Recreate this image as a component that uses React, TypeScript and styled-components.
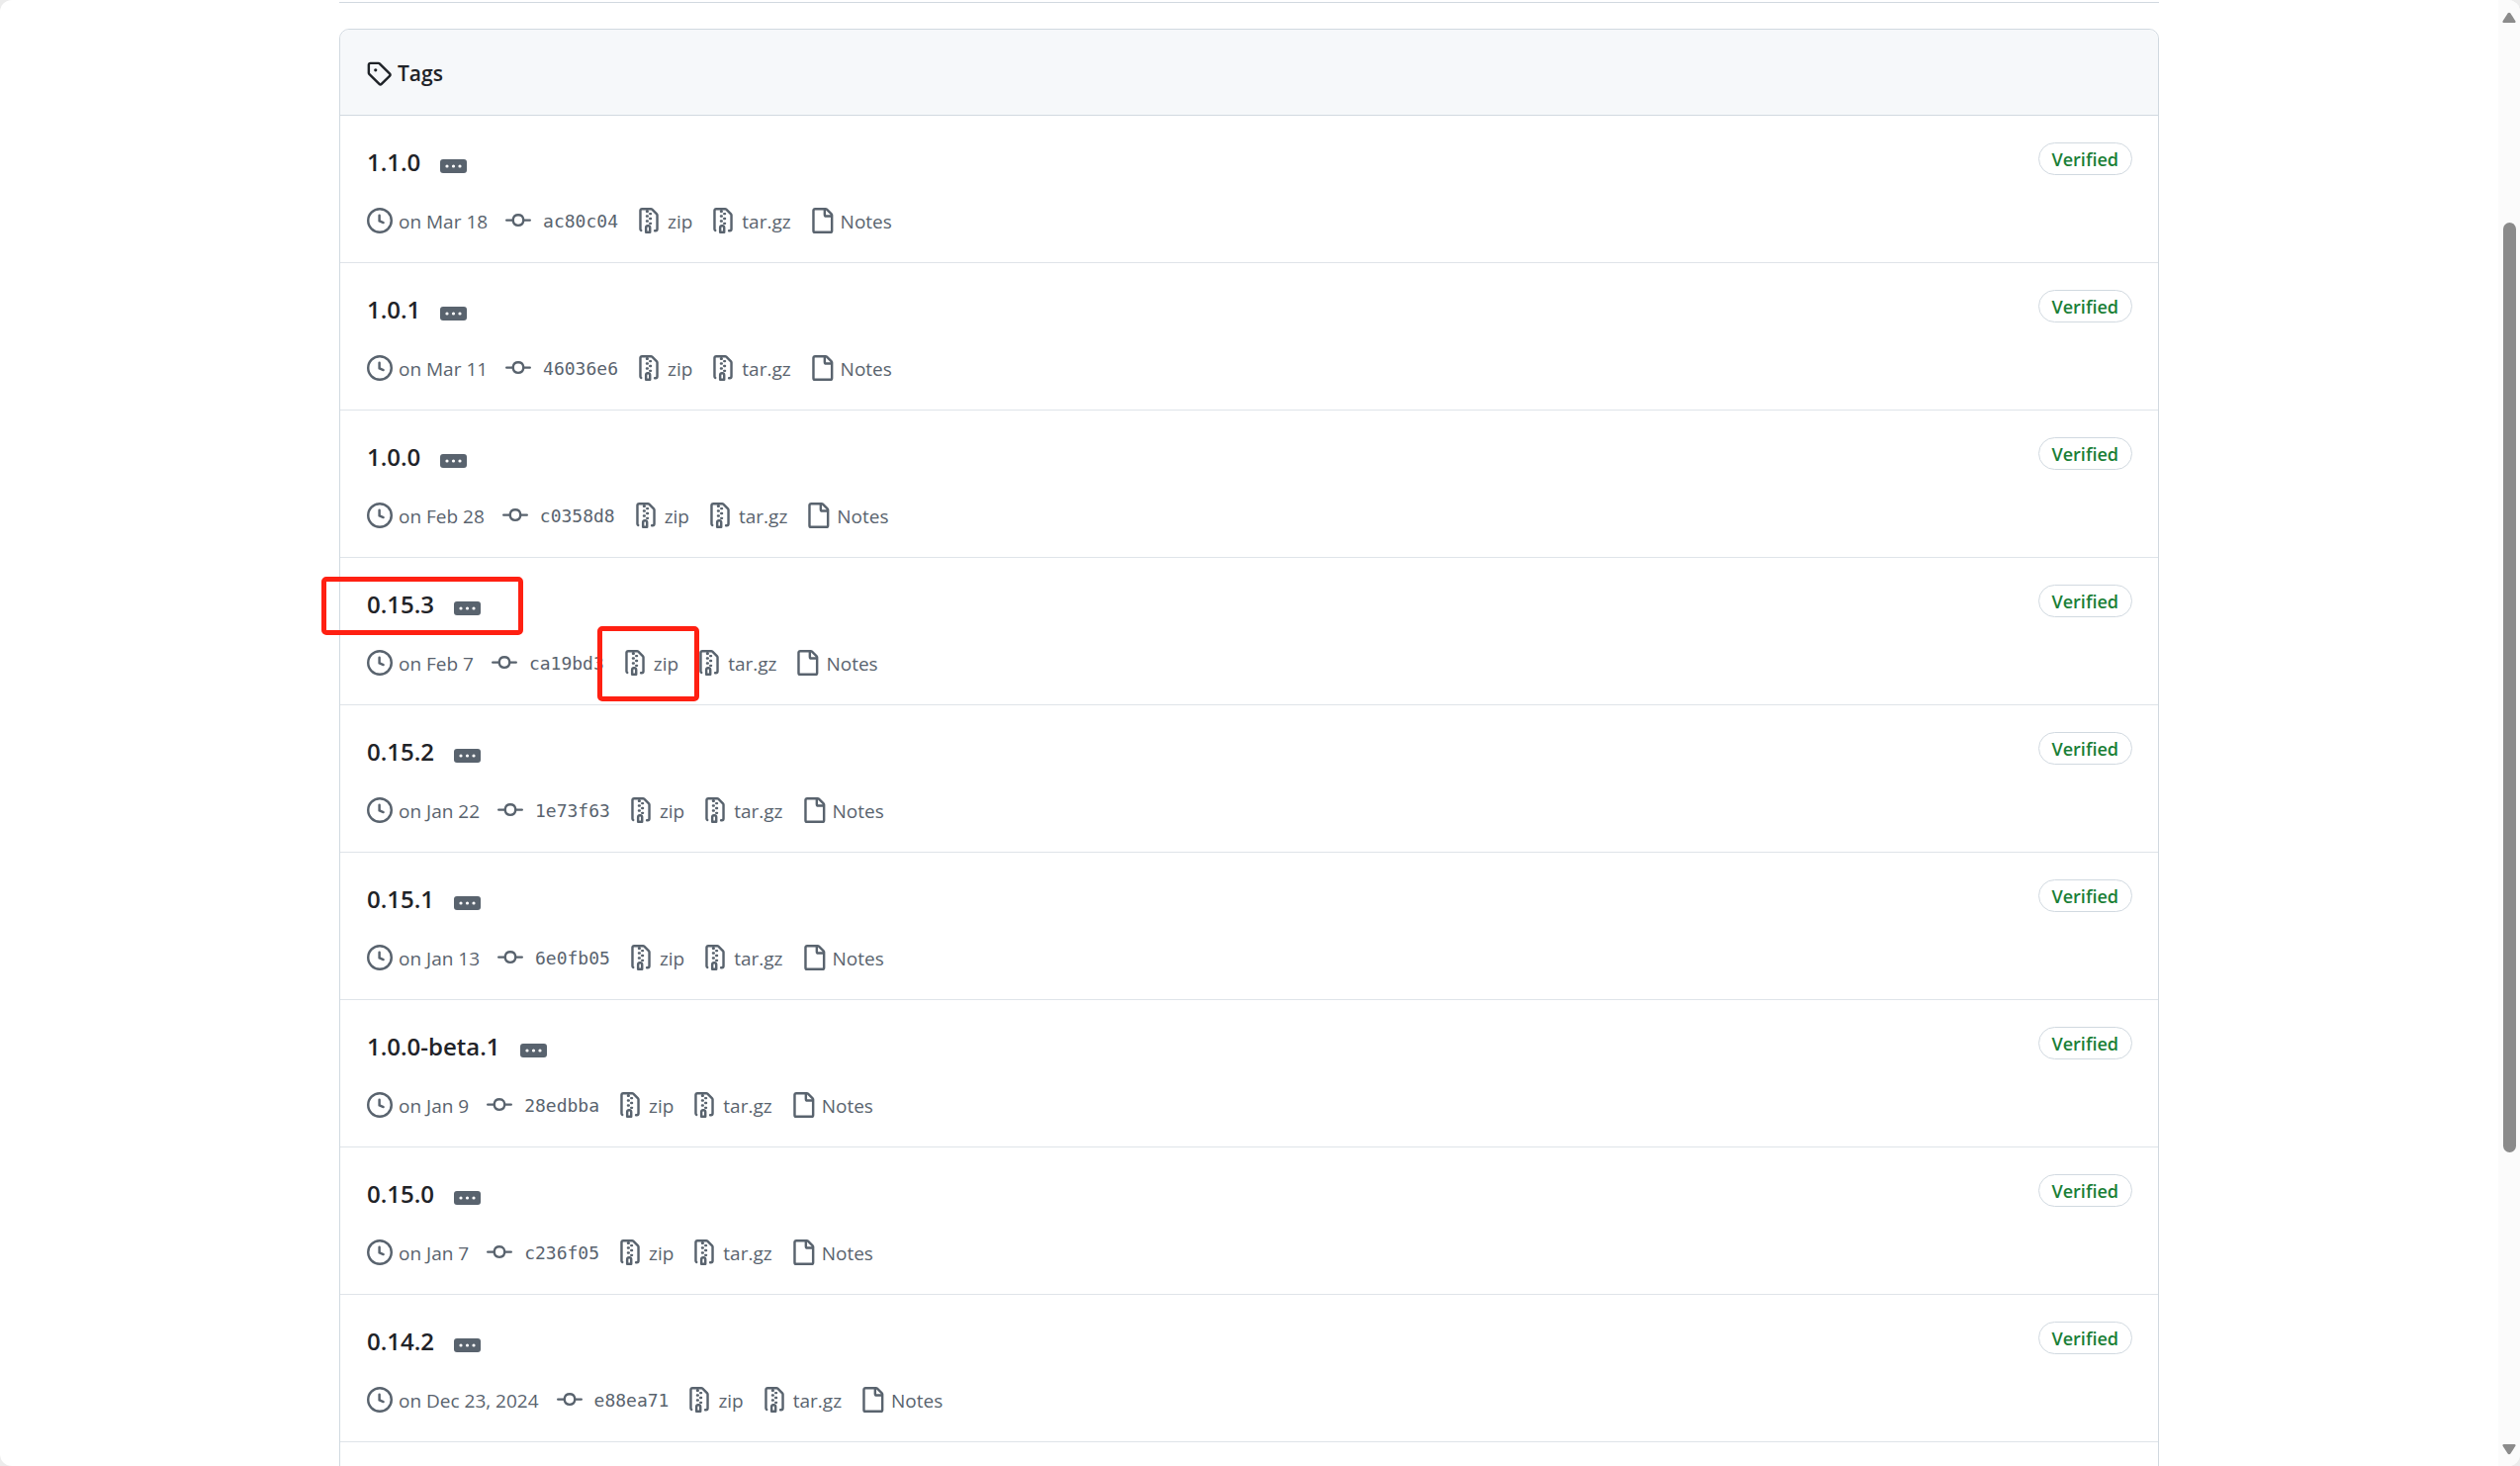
import React from 'react';
import styled, { createGlobalStyle } from 'styled-components';

const GlobalStyle = createGlobalStyle`
  * { box-sizing: border-box; }
  body {
    margin: 0;
    background: #ececec;
    color: #1f2328;
    font-family: "Open Sans", "Noto Sans", sans-serif;
  }
`;

const Window = styled.div`
  display: flex;
  height: 100vh;
  overflow: hidden;
  background: #ffffff;
  border-radius: 12px;
`;

const Content = styled.main`
  flex: 1;
  min-width: 0;
  height: 100%;
  overflow: hidden;
  padding: 2px 24px 0;
`;

const Container = styled.div`
  max-width: 1840px;
  margin: 0 auto;
`;

const TopRule = styled.hr`
  height: 1px;
  margin: 0 0 26px;
  border: 0;
  background: #d1d9e0;
`;

const Box = styled.section`
  border: 1px solid #d1d9e0;
  border-radius: 10px;
`;

const BoxHeader = styled.header`
  display: flex;
  align-items: center;
  gap: 6px;
  height: 87px;
  padding: 2px 26px 0;
  border-bottom: 1px solid #d1d9e0;
  border-radius: 10px 10px 0 0;
  background: #f6f8fa;
`;

const Heading = styled.h2`
  margin: 0;
  font-size: 21px;
  line-height: 30px;
  font-weight: 600;
`;

const TagList = styled.ul`
  margin: 0;
  padding: 0;
  list-style: none;
`;

const Row = styled.li`
  position: relative;
  display: flex;
  justify-content: space-between;
  align-items: flex-start;
  height: 149px;
  padding: 27px 26px 0 27px;
  border-bottom: 1px solid #dfe4e9;
`;

const TitleLine = styled.div`
  display: flex;
  align-items: center;
  gap: 20px;
  height: 40px;
`;

const TagName = styled.h3`
  margin: 0;
  font-size: 24px;
  line-height: 32px;
  font-weight: 600;
`;

const Link = styled.a`
  color: inherit;
  text-decoration: none;
`;

const Expander = styled.button`
  display: flex;
  align-items: center;
  justify-content: center;
  width: 27px;
  height: 14px;
  margin-top: 8px;
  padding: 0;
  border: 0;
  border-radius: 3px;
  background: #59636e;
  cursor: pointer;
`;

const MetaLine = styled.ul`
  display: flex;
  align-items: center;
  gap: 18px;
  height: 30px;
  margin: 24px 0 0;
  padding: 0;
  list-style: none;
  color: #59636e;
  font-size: 19px;
  line-height: 26px;
`;

const MetaItem = styled.li`
  display: flex;
`;

const MetaLink = styled(Link)`
  display: flex;
  align-items: center;
  gap: 6px;
`;

const MetaDate = styled.span`
  display: flex;
  align-items: center;
  gap: 6px;
`;

const HashLink = styled(MetaLink)`
  gap: 12px;
`;

const MetaText = styled.span`
  padding-top: 2px;
`;

const Hash = styled.code`
  padding-top: 2px;
  font-family: "DejaVu Sans Mono", "Liberation Mono", monospace;
  font-size: 18px;
`;

const Icon = styled.svg`
  flex: none;
  width: 26px;
  height: 26px;
  fill: currentColor;
`;

const Verified = styled.button`
  height: 33px;
  padding: 0 13px;
  border: 1px solid #d1d9e0;
  border-radius: 17px;
  background: transparent;
  color: #1a7f37;
  font-family: inherit;
  font-size: 18px;
  line-height: 30px;
  font-weight: 600;
  cursor: pointer;
`;

const Marker = styled.span`
  position: absolute;
  border: 5px solid #ff2012;
  border-radius: 5px;
  pointer-events: none;
`;

const NameMarker = styled(Marker)`
  top: 19px;
  left: -19px;
  width: 204px;
  height: 59px;
`;

const ZipMarker = styled(Marker)`
  top: 69px;
  left: 260px;
  width: 103px;
  height: 76px;
`;

const Scrollbar = styled.div`
  display: flex;
  flex-direction: column;
  align-items: center;
  width: 22px;
  padding: 12px 0 11px;
  background: #fbfbfb;
`;

const Arrow = styled.svg`
  flex: none;
  width: 14px;
  height: 12px;
  fill: #8b8b8b;
`;

const Track = styled.div`
  display: grid;
  flex: 1;
  grid-template-rows: 201fr 940fr 294fr;
`;

const Thumb = styled.div`
  grid-row: 2;
  width: 13px;
  border-radius: 7px;
  background: #8b8b8b;
`;

const paths = {
  tag: 'M1 7.775V2.75C1 1.784 1.784 1 2.75 1h5.025c.464 0 .91.184 1.238.513l6.25 6.25a1.75 1.75 0 0 1 0 2.474l-5.026 5.026a1.75 1.75 0 0 1-2.474 0l-6.25-6.25A1.752 1.752 0 0 1 1 7.775Zm1.5 0c0 .066.026.13.073.177l6.25 6.25a.25.25 0 0 0 .354 0l5.025-5.025a.25.25 0 0 0 0-.354l-6.25-6.25a.25.25 0 0 0-.177-.073H2.75a.25.25 0 0 0-.25.25ZM6 5a1 1 0 1 1 0 2 1 1 0 0 1 0-2Z',
  clock: 'M8 0a8 8 0 1 1 0 16A8 8 0 0 1 8 0ZM1.5 8a6.5 6.5 0 1 0 13 0 6.5 6.5 0 0 0-13 0Zm7-3.25v2.992l2.028.812a.75.75 0 0 1-.557 1.392l-2.5-1A.751.751 0 0 1 7 8.25v-3.5a.75.75 0 0 1 1.5 0Z',
  commit: 'M11.93 8.5a4.002 4.002 0 0 1-7.86 0H.75a.75.75 0 0 1 0-1.5h3.32a4.002 4.002 0 0 1 7.86 0h3.32a.75.75 0 0 1 0 1.5Zm-1.43-.75a2.5 2.5 0 1 0-5 0 2.5 2.5 0 0 0 5 0Z',
  zip: 'M3.5 1.75v11.5c0 .09.048.173.126.217a.75.75 0 0 1-.752 1.298A1.748 1.748 0 0 1 2 13.25V1.75C2 .784 2.784 0 3.75 0h5.586c.464 0 .909.185 1.237.513l2.914 2.914c.329.328.513.773.513 1.237v8.586A1.75 1.75 0 0 1 12.25 15h-.5a.75.75 0 0 1 0-1.5h.5a.25.25 0 0 0 .25-.25V4.664a.25.25 0 0 0-.073-.177L9.513 1.573a.25.25 0 0 0-.177-.073H7.25a.75.75 0 0 1 0 1.5h-.5a.75.75 0 0 1 0-1.5h-3a.25.25 0 0 0-.25.25Zm3.75 8.75h.5c.966 0 1.75.784 1.75 1.75v3a.75.75 0 0 1-.75.75h-2.5a.75.75 0 0 1-.75-.75v-3c0-.966.784-1.75 1.75-1.75ZM6 5.25a.75.75 0 0 1 .75-.75h.5a.75.75 0 0 1 0 1.5h-.5A.75.75 0 0 1 6 5.25Zm.75 2.25h.5a.75.75 0 0 1 0 1.5h-.5a.75.75 0 0 1 0-1.5ZM8 6.75A.75.75 0 0 1 8.75 6h.5a.75.75 0 0 1 0 1.5h-.5A.75.75 0 0 1 8 6.75ZM8.75 3h.5a.75.75 0 0 1 0 1.5h-.5a.75.75 0 0 1 0-1.5ZM8 9.75A.75.75 0 0 1 8.75 9h.5a.75.75 0 0 1 0 1.5h-.5A.75.75 0 0 1 8 9.75Zm-1 2.5v2.25h1v-2.25a.25.25 0 0 0-.25-.25h-.5a.25.25 0 0 0-.25.25Z',
  file: 'M2 1.75C2 .784 2.784 0 3.75 0h6.586c.464 0 .909.184 1.237.513l2.914 2.914c.329.328.513.773.513 1.237v9.586A1.75 1.75 0 0 1 13.25 16h-9.5A1.75 1.75 0 0 1 2 14.25Zm1.75-.25a.25.25 0 0 0-.25.25v12.5c0 .138.112.25.25.25h9.5a.25.25 0 0 0 .25-.25V6h-2.75A1.75 1.75 0 0 1 9 4.25V1.5Zm6.75.062V4.25c0 .138.112.25.25.25h2.688l-.011-.013-2.914-2.914-.013-.011Z',
};

function Octicon({ name }: { name: keyof typeof paths }) {
  return (
    <Icon viewBox="0 0 16 16" aria-hidden="true">
      <path d={paths[name]} />
    </Icon>
  );
}

interface Tag {
  name: string;
  date: string;
  hash: string;
  marked?: boolean;
}

const tags: Tag[] = [
  { name: '1.1.0', date: 'Mar 18', hash: 'ac80c04' },
  { name: '1.0.1', date: 'Mar 11', hash: '46036e6' },
  { name: '1.0.0', date: 'Feb 28', hash: 'c0358d8' },
  { name: '0.15.3', date: 'Feb 7', hash: 'ca19bd3', marked: true },
  { name: '0.15.2', date: 'Jan 22', hash: '1e73f63' },
  { name: '0.15.1', date: 'Jan 13', hash: '6e0fb05' },
  { name: '1.0.0-beta.1', date: 'Jan 9', hash: '28edbba' },
  { name: '0.15.0', date: 'Jan 7', hash: 'c236f05' },
  { name: '0.14.2', date: 'Dec 23, 2024', hash: 'e88ea71' },
];

function TagRow({ tag }: { tag: Tag }) {
  return (
    <Row>
      <div>
        <TitleLine>
          <TagName>
            <Link href={`#${tag.name}`}>{tag.name}</Link>
          </TagName>
          <Expander type="button" aria-label="Toggle commit message">
            <svg width="17" height="4" viewBox="0 0 17 4" fill="#ffffff" aria-hidden="true">
              <circle cx="2" cy="2" r="1.6" />
              <circle cx="8.5" cy="2" r="1.6" />
              <circle cx="15" cy="2" r="1.6" />
            </svg>
          </Expander>
        </TitleLine>
        <MetaLine>
          <MetaItem>
            <MetaDate>
              <Octicon name="clock" />
              <MetaText>on {tag.date}</MetaText>
            </MetaDate>
          </MetaItem>
          <MetaItem>
            <HashLink href={`#${tag.hash}`}>
              <Octicon name="commit" />
              <Hash>{tag.hash}</Hash>
            </HashLink>
          </MetaItem>
          <MetaItem>
            <MetaLink href={`#${tag.name}.zip`}>
              <Octicon name="zip" />
              <MetaText>zip</MetaText>
            </MetaLink>
          </MetaItem>
          <MetaItem>
            <MetaLink href={`#${tag.name}.tar.gz`}>
              <Octicon name="zip" />
              <MetaText>tar.gz</MetaText>
            </MetaLink>
          </MetaItem>
          <MetaItem>
            <MetaLink href={`#notes-${tag.name}`}>
              <Octicon name="file" />
              <MetaText>Notes</MetaText>
            </MetaLink>
          </MetaItem>
        </MetaLine>
      </div>
      <Verified type="button">Verified</Verified>
      {tag.marked && (
        <>
          <NameMarker />
          <ZipMarker />
        </>
      )}
    </Row>
  );
}

export default function App() {
  return (
    <>
      <GlobalStyle />
      <Window>
        <Content>
          <Container>
            <TopRule />
            <Box>
              <BoxHeader>
                <Octicon name="tag" />
                <Heading>Tags</Heading>
              </BoxHeader>
              <TagList>
                {tags.map((tag) => (
                  <TagRow key={tag.name} tag={tag} />
                ))}
                <Row />
              </TagList>
            </Box>
          </Container>
        </Content>
        <Scrollbar aria-hidden="true">
          <Arrow viewBox="0 0 14 12">
            <path d="M5.6 1.6a1.7 1.7 0 0 1 2.8 0l5 7.6a1.2 1.2 0 0 1-1 1.8H1.6a1.2 1.2 0 0 1-1-1.8Z" />
          </Arrow>
          <Track>
            <Thumb />
          </Track>
          <Arrow viewBox="0 0 14 12">
            <path d="M5.6 10.4a1.7 1.7 0 0 0 2.8 0l5-7.6a1.2 1.2 0 0 0-1-1.8H1.6a1.2 1.2 0 0 0-1 1.8Z" />
          </Arrow>
        </Scrollbar>
      </Window>
    </>
  );
}
